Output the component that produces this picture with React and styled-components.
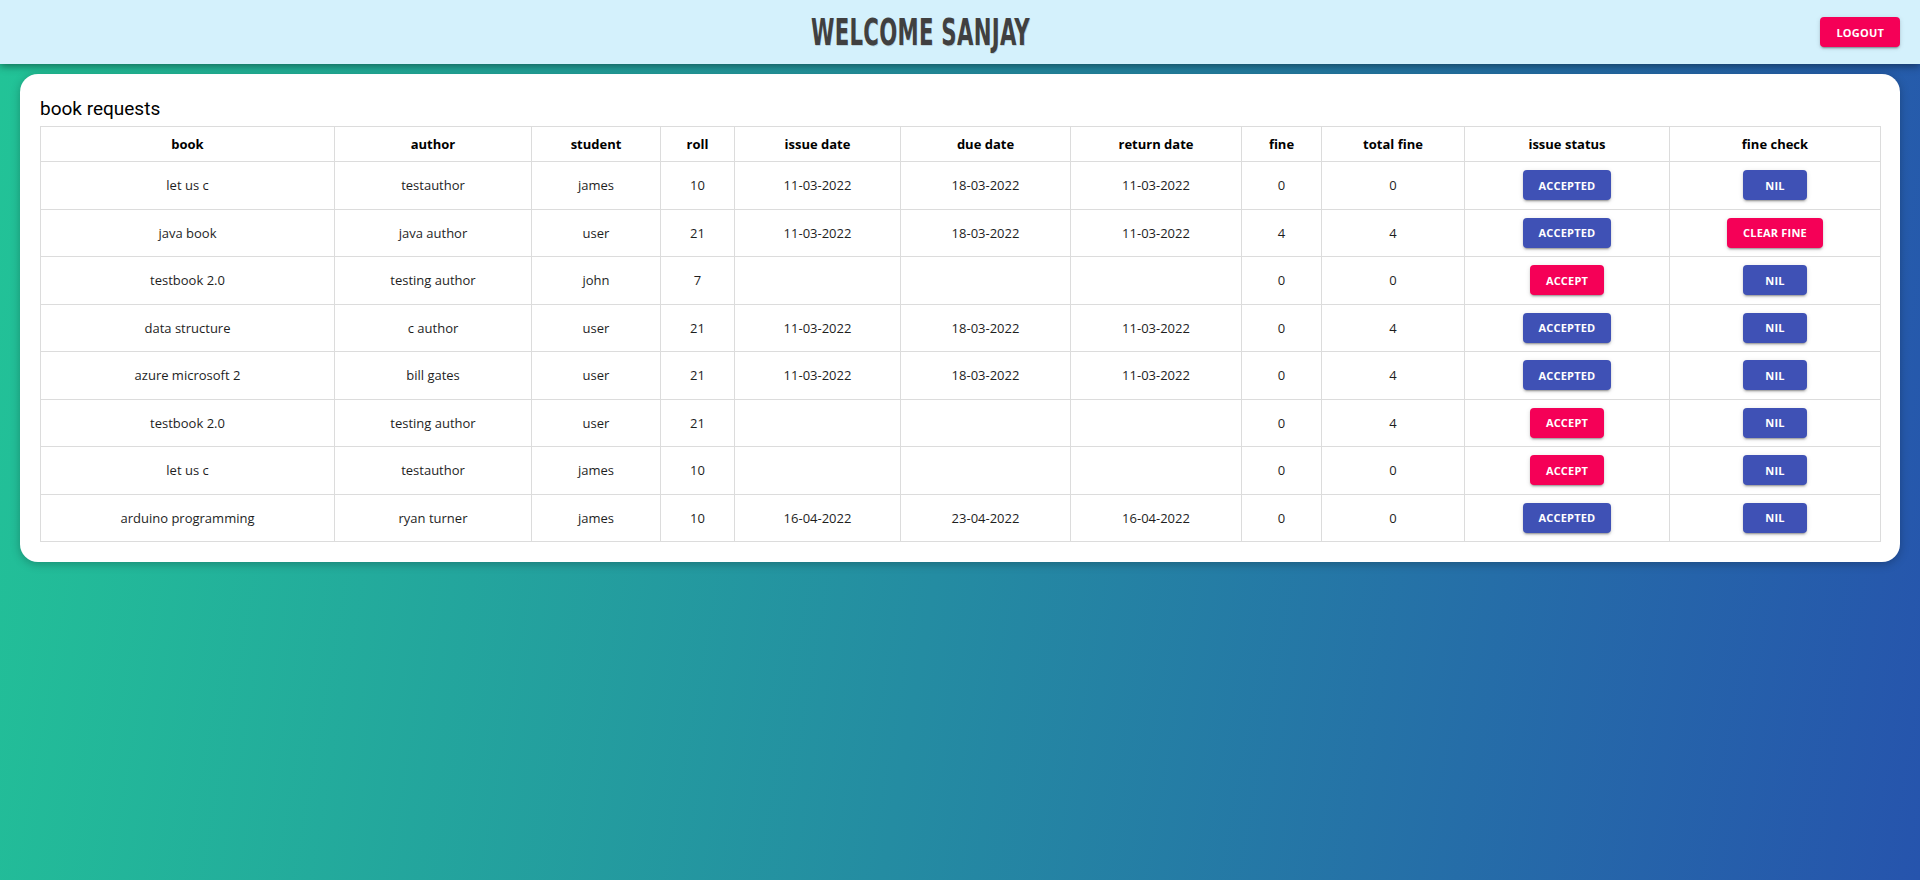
import React from "react";
import styled, { createGlobalStyle } from "styled-components";

const GlobalStyle = createGlobalStyle`
  html, body {
    margin: 0;
    padding: 0;
  }
  body {
    font-family: "Open Sans", "Noto Sans", sans-serif;
    background: linear-gradient(100deg, #22c497 0%, #2654ad 100%);
    min-height: 880px;
  }
`;

const Page = styled.div`
  min-height: 880px;
  display: flex;
  flex-direction: column;
`;

const Header = styled.header`
  height: 64px;
  background-color: #d4f1fc;
  box-shadow: 0 2px 8px rgba(0, 0, 0, 0.45);
  display: flex;
  align-items: center;
  justify-content: space-between;
  padding: 0 20px;
  position: relative;
  z-index: 2;
`;

const Spacer = styled.div`
  width: 0;
`;

const Title = styled.h1`
  margin: 0;
  font-family: "DejaVu Sans Condensed", "DejaVu Sans", sans-serif;
  font-weight: bold;
  font-size: 38px;
  color: #404040;
  letter-spacing: 0.5px;
  transform: scaleX(0.62);
  text-shadow: 1px 1px 0 rgba(0, 0, 0, 0.15);
  width: 213px;
  white-space: nowrap;
  display: flex;
  justify-content: center;
`;

const Button = styled.button`
  display: inline-flex;
  align-items: center;
  justify-content: center;
  vertical-align: middle;
  border: none;
  border-radius: 4px;
  height: 30px;
  min-width: 64px;
  padding: 0 16px;
  font-family: "Open Sans", sans-serif;
  font-weight: 700;
  font-size: 11px;
  letter-spacing: 0.2px;
  text-transform: uppercase;
  color: #fff;
  cursor: pointer;
  background-color: ${(p) => (p.$pink ? "#f50057" : "#3f51b5")};
  box-shadow: 0px 3px 1px -2px rgba(0, 0, 0, 0.2),
    0px 2px 2px 0px rgba(0, 0, 0, 0.14), 0px 1px 5px 0px rgba(0, 0, 0, 0.12);
`;

const Card = styled.section`
  margin: 10px 20px;
  background-color: #fff;
  border-radius: 18px;
  padding: 24px 20px 20px;
  box-shadow: 0 2px 10px rgba(0, 0, 0, 0.25);
`;

const CardTitle = styled.h3`
  margin: 0 0 6px;
  font-family: Roboto, sans-serif;
  font-weight: 400;
  font-size: 19px;
  line-height: 22px;
  color: #000;
`;

const Table = styled.table`
  width: 100%;
  border-collapse: collapse;
  table-layout: fixed;
`;

const Th = styled.th`
  border: 1px solid #dcdcdc;
  height: 34px;
  padding: 0 6px;
  font-size: 13px;
  line-height: 16px;
  font-weight: 700;
  color: #000;
  text-align: center;
`;

const Td = styled.td`
  border: 1px solid #dcdcdc;
  height: 46.5px;
  padding: 0 6px;
  font-size: 13px;
  line-height: 16px;
  color: #1e1e1e;
  text-align: center;
`;

const columns = [
  { label: "book", width: 294 },
  { label: "author", width: 197 },
  { label: "student", width: 129 },
  { label: "roll", width: 74 },
  { label: "issue date", width: 166 },
  { label: "due date", width: 170 },
  { label: "return date", width: 171 },
  { label: "fine", width: 80 },
  { label: "total fine", width: 143 },
  { label: "issue status", width: 205 },
  { label: "fine check", width: 211 },
];

const requests = [
  { book: "let us c", author: "testauthor", student: "james", roll: 10, issue: "11-03-2022", due: "18-03-2022", ret: "11-03-2022", fine: 0, total: 0, accepted: true, clear: false },
  { book: "java book", author: "java author", student: "user", roll: 21, issue: "11-03-2022", due: "18-03-2022", ret: "11-03-2022", fine: 4, total: 4, accepted: true, clear: true },
  { book: "testbook 2.0", author: "testing author", student: "john", roll: 7, issue: "", due: "", ret: "", fine: 0, total: 0, accepted: false, clear: false },
  { book: "data structure", author: "c author", student: "user", roll: 21, issue: "11-03-2022", due: "18-03-2022", ret: "11-03-2022", fine: 0, total: 4, accepted: true, clear: false },
  { book: "azure microsoft 2", author: "bill gates", student: "user", roll: 21, issue: "11-03-2022", due: "18-03-2022", ret: "11-03-2022", fine: 0, total: 4, accepted: true, clear: false },
  { book: "testbook 2.0", author: "testing author", student: "user", roll: 21, issue: "", due: "", ret: "", fine: 0, total: 4, accepted: false, clear: false },
  { book: "let us c", author: "testauthor", student: "james", roll: 10, issue: "", due: "", ret: "", fine: 0, total: 0, accepted: false, clear: false },
  { book: "arduino programming", author: "ryan turner", student: "james", roll: 10, issue: "16-04-2022", due: "23-04-2022", ret: "16-04-2022", fine: 0, total: 0, accepted: true, clear: false },
];

export default function App() {
  return (
    <Page>
      <GlobalStyle />
      <Header>
        <Spacer />
        <Title>WELCOME SANJAY</Title>
        <Button $pink>Logout</Button>
      </Header>
      <Card>
        <CardTitle>book requests</CardTitle>
        <Table>
          <colgroup>
            {columns.map((c) => (
              <col key={c.label} style={{ width: c.width }} />
            ))}
          </colgroup>
          <thead>
            <tr>
              {columns.map((c) => (
                <Th key={c.label}>{c.label}</Th>
              ))}
            </tr>
          </thead>
          <tbody>
            {requests.map((r, idx) => (
              <tr key={idx}>
                <Td>{r.book}</Td>
                <Td>{r.author}</Td>
                <Td>{r.student}</Td>
                <Td>{r.roll}</Td>
                <Td>{r.issue}</Td>
                <Td>{r.due}</Td>
                <Td>{r.ret}</Td>
                <Td>{r.fine}</Td>
                <Td>{r.total}</Td>
                <Td>
                  {r.accepted ? <Button>Accepted</Button> : <Button $pink>Accept</Button>}
                </Td>
                <Td>
                  {r.clear ? <Button $pink>Clear fine</Button> : <Button>Nil</Button>}
                </Td>
              </tr>
            ))}
          </tbody>
        </Table>
      </Card>
    </Page>
  );
}
